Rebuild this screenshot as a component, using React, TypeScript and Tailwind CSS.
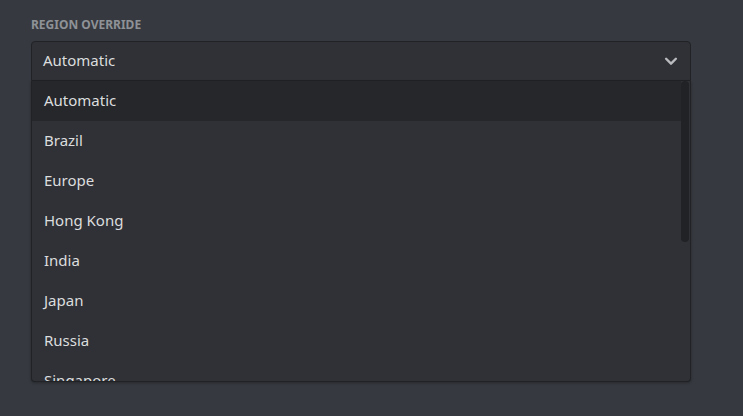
import React from "react";

const options = [
  "Automatic",
  "Brazil",
  "Europe",
  "Hong Kong",
  "India",
  "Japan",
  "Russia",
  "Singapore",
  "South Africa",
  "Sydney",
  "US Central",
  "US East",
  "US South",
  "US West",
];

export default function App() {
  return (
    <div
      className="w-[743px] h-[416px] bg-[#36393f] overflow-hidden pl-[31px] pr-[52px] pt-[17px]"
      style={{ fontFamily: '"Noto Sans", "Open Sans", sans-serif' }}
    >
      <div className="text-[12px] leading-[16px] font-bold text-[#8e9297] uppercase mb-[8px]">
        Region Override
      </div>
      <div className="relative w-[660px]">
        <div className="h-[40px] flex items-center justify-between pl-[11px] pr-[10px] pb-[2px] bg-[#2f3136] border border-[#202225] rounded-t-[4px] text-[#dcddde] text-[15px]">
          <span>Automatic</span>
          <svg width="18" height="18" viewBox="0 0 24 24" className="text-[#b9bbbe] mt-[2px]">
            <path
              d="M5.5 9l6.5 6.5L18.5 9"
              fill="none"
              stroke="currentColor"
              strokeWidth="3.2"
              strokeLinecap="round"
              strokeLinejoin="round"
            />
          </svg>
        </div>
        <div className="relative h-[301px] bg-[#2f3136] border border-t-0 border-[#202225] rounded-b-[4px] overflow-hidden shadow-[0_1px_3px_rgba(0,0,0,0.3)]">
          <div className="pr-[9px]">
            {options.map((o, i) => (
              <div
                key={o}
                className={`h-[40px] flex items-center pl-[12px] pb-[2px] text-[15px] text-[#dcddde] ${
                  i === 0 ? "bg-[#25272b]" : ""
                }`}
              >
                {o}
              </div>
            ))}
          </div>
          <div className="absolute right-[1px] top-[0px] w-[8px] h-[161px] bg-[#202225] rounded-[4px]" />
        </div>
      </div>
    </div>
  );
}
